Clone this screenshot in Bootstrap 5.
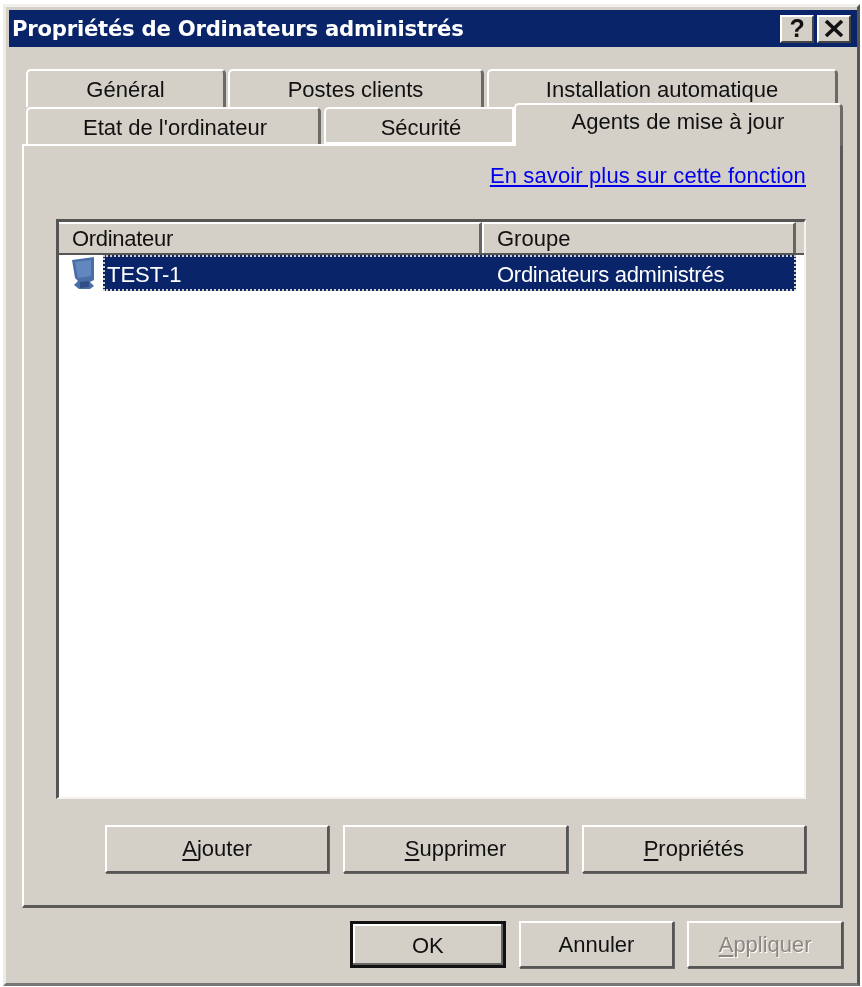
<!DOCTYPE html>
<html lang="fr">
<head>
<meta charset="utf-8">
<title>Propriétés de Ordinateurs administrés</title>
<link href="https://cdn.jsdelivr.net/npm/bootstrap@5.3.0/dist/css/bootstrap.min.css" rel="stylesheet">
<style>
html,body{margin:0;height:100%;background:#fff}
body{width:862px;height:987px;overflow:hidden;font-family:"Liberation Sans",Arial,sans-serif;font-size:22px;color:#111;padding:4px 2px 0 3px}
.dlg{width:857px;height:982px;background:#d4d0c8;border-left:3px solid #ecebe6;border-top:3px solid #f1f0ec;border-right:3px solid #555;border-bottom:3px solid #777;padding:3px 0 0 3px;filter:blur(.45px)}
.ttl{height:37px;width:848px;background:#0a246a;color:#fff;font-family:"DejaVu Sans",sans-serif;font-weight:700;font-size:21.2px;padding-left:3px;letter-spacing:-.25px}
.ctl{width:34px;height:28px;background:#d4d0c8;border:2px solid;border-color:#fff #444 #444 #fff;color:#111;font-weight:700;font-family:"Liberation Sans",sans-serif;font-size:25px;line-height:1}
.ctls{gap:3px;padding-right:6px}
.tabs{width:821px;margin:22px 0 0 13px}
.tabrow{height:38px;padding-left:4px}
.tabrow2{height:37px}
.tb{height:100%;background:#d4d0c8;border-top:2px solid #fff;border-left:2px solid #fff;border-right:3px solid #6a6a66;border-top-left-radius:5px;border-top-right-radius:5px;text-align:center;line-height:38px;white-space:nowrap}
.t1{width:200px}.t2{width:256px;margin-left:2px}.t3{width:351px;margin-left:3px}
.t4{width:295px;padding-left:4px}.t5{width:190px;margin-left:3px;padding-left:4px;border-right:2px solid #fff;border-bottom:2px solid #fff;border-bottom-right-radius:0;border-top-right-radius:0}
.t6{width:329px;height:43px;margin-top:-4px;position:relative;z-index:2;line-height:34px;border-right:3px solid #6a6a66;flex:none}
.panel{width:821px;height:764px;background:#d4d0c8;border-top:2px solid #fff;border-left:2px solid #fff;border-right:3px solid #5a5a58;border-bottom:3px solid #5a5a58;padding:0 34px 0 32px}
.lnk{color:#0000ee;text-decoration:underline;height:73px;padding-top:15px;line-height:30px;letter-spacing:.13px}
.lst{height:580px;width:750px;background:#fff;border-top:3px solid #555;border-left:3px solid #555;border-right:2px solid #f4f3ef;border-bottom:2px solid #f4f3ef}
.hd{height:33px;background:#d4d0c8;border-bottom:2px solid #555}
.hc{border-top:2px solid #fff;border-right:3px solid #666;line-height:29px;padding-left:13px;height:100%}
.h1c{width:423px;letter-spacing:-.3px}.h2c{width:314px;border-left:2px solid #fff}
.rw{height:36px}
.pcico{width:44px;height:36px;padding-left:11px}
.sel{width:693px;height:36px;background:#0a246a;color:#fff;outline:2px dotted #d4d0c8;outline-offset:-2px;line-height:39px;padding-left:4px}
.sa{width:390px}
.sb{letter-spacing:-.28px}
.bts1{margin:26px 0 0 49px;gap:14px}
.wb{background:#d4d0c8;border:2px solid;border-color:#fff #555 #555 #fff;height:48px;text-align:center;line-height:44px;color:#111;box-shadow:1px 1px 0 #666;padding:0;border-radius:0;font-size:22px}
.w225{width:225px}
.bts2{gap:13px;margin:13px 0 0 328px;width:493px}
.w156{width:156px;height:47px}
.def{border:3px solid #111;box-shadow:inset -2px -2px 0 #666,inset 2px 2px 0 #fff}
.dis{color:#8a8780;text-shadow:1px 1px 0 #fff}
u{text-underline-offset:3px}
</style>
</head>
<body>
<div class="dlg">
  <div class="ttl d-flex align-items-center justify-content-between">
    <span>Propriétés de Ordinateurs administrés</span>
    <div class="ctls d-flex">
      <div class="ctl d-flex align-items-center justify-content-center">?</div>
      <div class="ctl d-flex align-items-center justify-content-center"><svg width="20" height="17" viewBox="0 0 20 17"><path d="M2 1L18 16M18 1L2 16" stroke="#111" stroke-width="3.6" fill="none"/></svg></div>
    </div>
  </div>
  <div class="tabs">
    <div class="tabrow d-flex">
      <div class="tb t1">Général</div>
      <div class="tb t2">Postes clients</div>
      <div class="tb t3">Installation automatique</div>
    </div>
    <div class="tabrow tabrow2 d-flex">
      <div class="tb t4">Etat de l'ordinateur</div>
      <div class="tb t5">Sécurité</div>
      <div class="tb t6">Agents de mise à jour</div>
    </div>
    <div class="panel">
      <div class="lnk text-end">En savoir plus sur cette fonction</div>
      <div class="lst">
        <div class="hd d-flex">
          <div class="hc h1c">Ordinateur</div>
          <div class="hc h2c">Groupe</div>
        </div>
        <div class="rw d-flex">
          <div class="pcico"><svg width="26" height="34" viewBox="0 0 26 34"><path d="M2 4L24 1V24L20 26L24 30L20 33H9L4 29L8 25L5 22Z" fill="#4a6ea8"/><path d="M5 6L21 4V20L8 22Z" fill="#6286bd"/><path d="M10 26L19 25V31L10 32Z" fill="#2f4f86"/></svg></div>
          <div class="sel d-flex"><div class="sa">TEST-1</div><div class="sb">Ordinateurs administrés</div></div>
        </div>
      </div>
      <div class="bts1 d-flex">
        <button class="wb w225"><u>A</u>jouter</button>
        <button class="wb w225"><u>S</u>upprimer</button>
        <button class="wb w225"><u>P</u>ropriétés</button>
      </div>
    </div>
    <div class="bts2 d-flex">
      <button class="wb w156 def">OK</button>
      <button class="wb w156">Annuler</button>
      <button class="wb w156 dis"><u>A</u>ppliquer</button>
    </div>
  </div>
</div>
<script src="https://cdn.jsdelivr.net/npm/bootstrap@5.3.0/dist/js/bootstrap.bundle.min.js"></script>
</body>
</html>
